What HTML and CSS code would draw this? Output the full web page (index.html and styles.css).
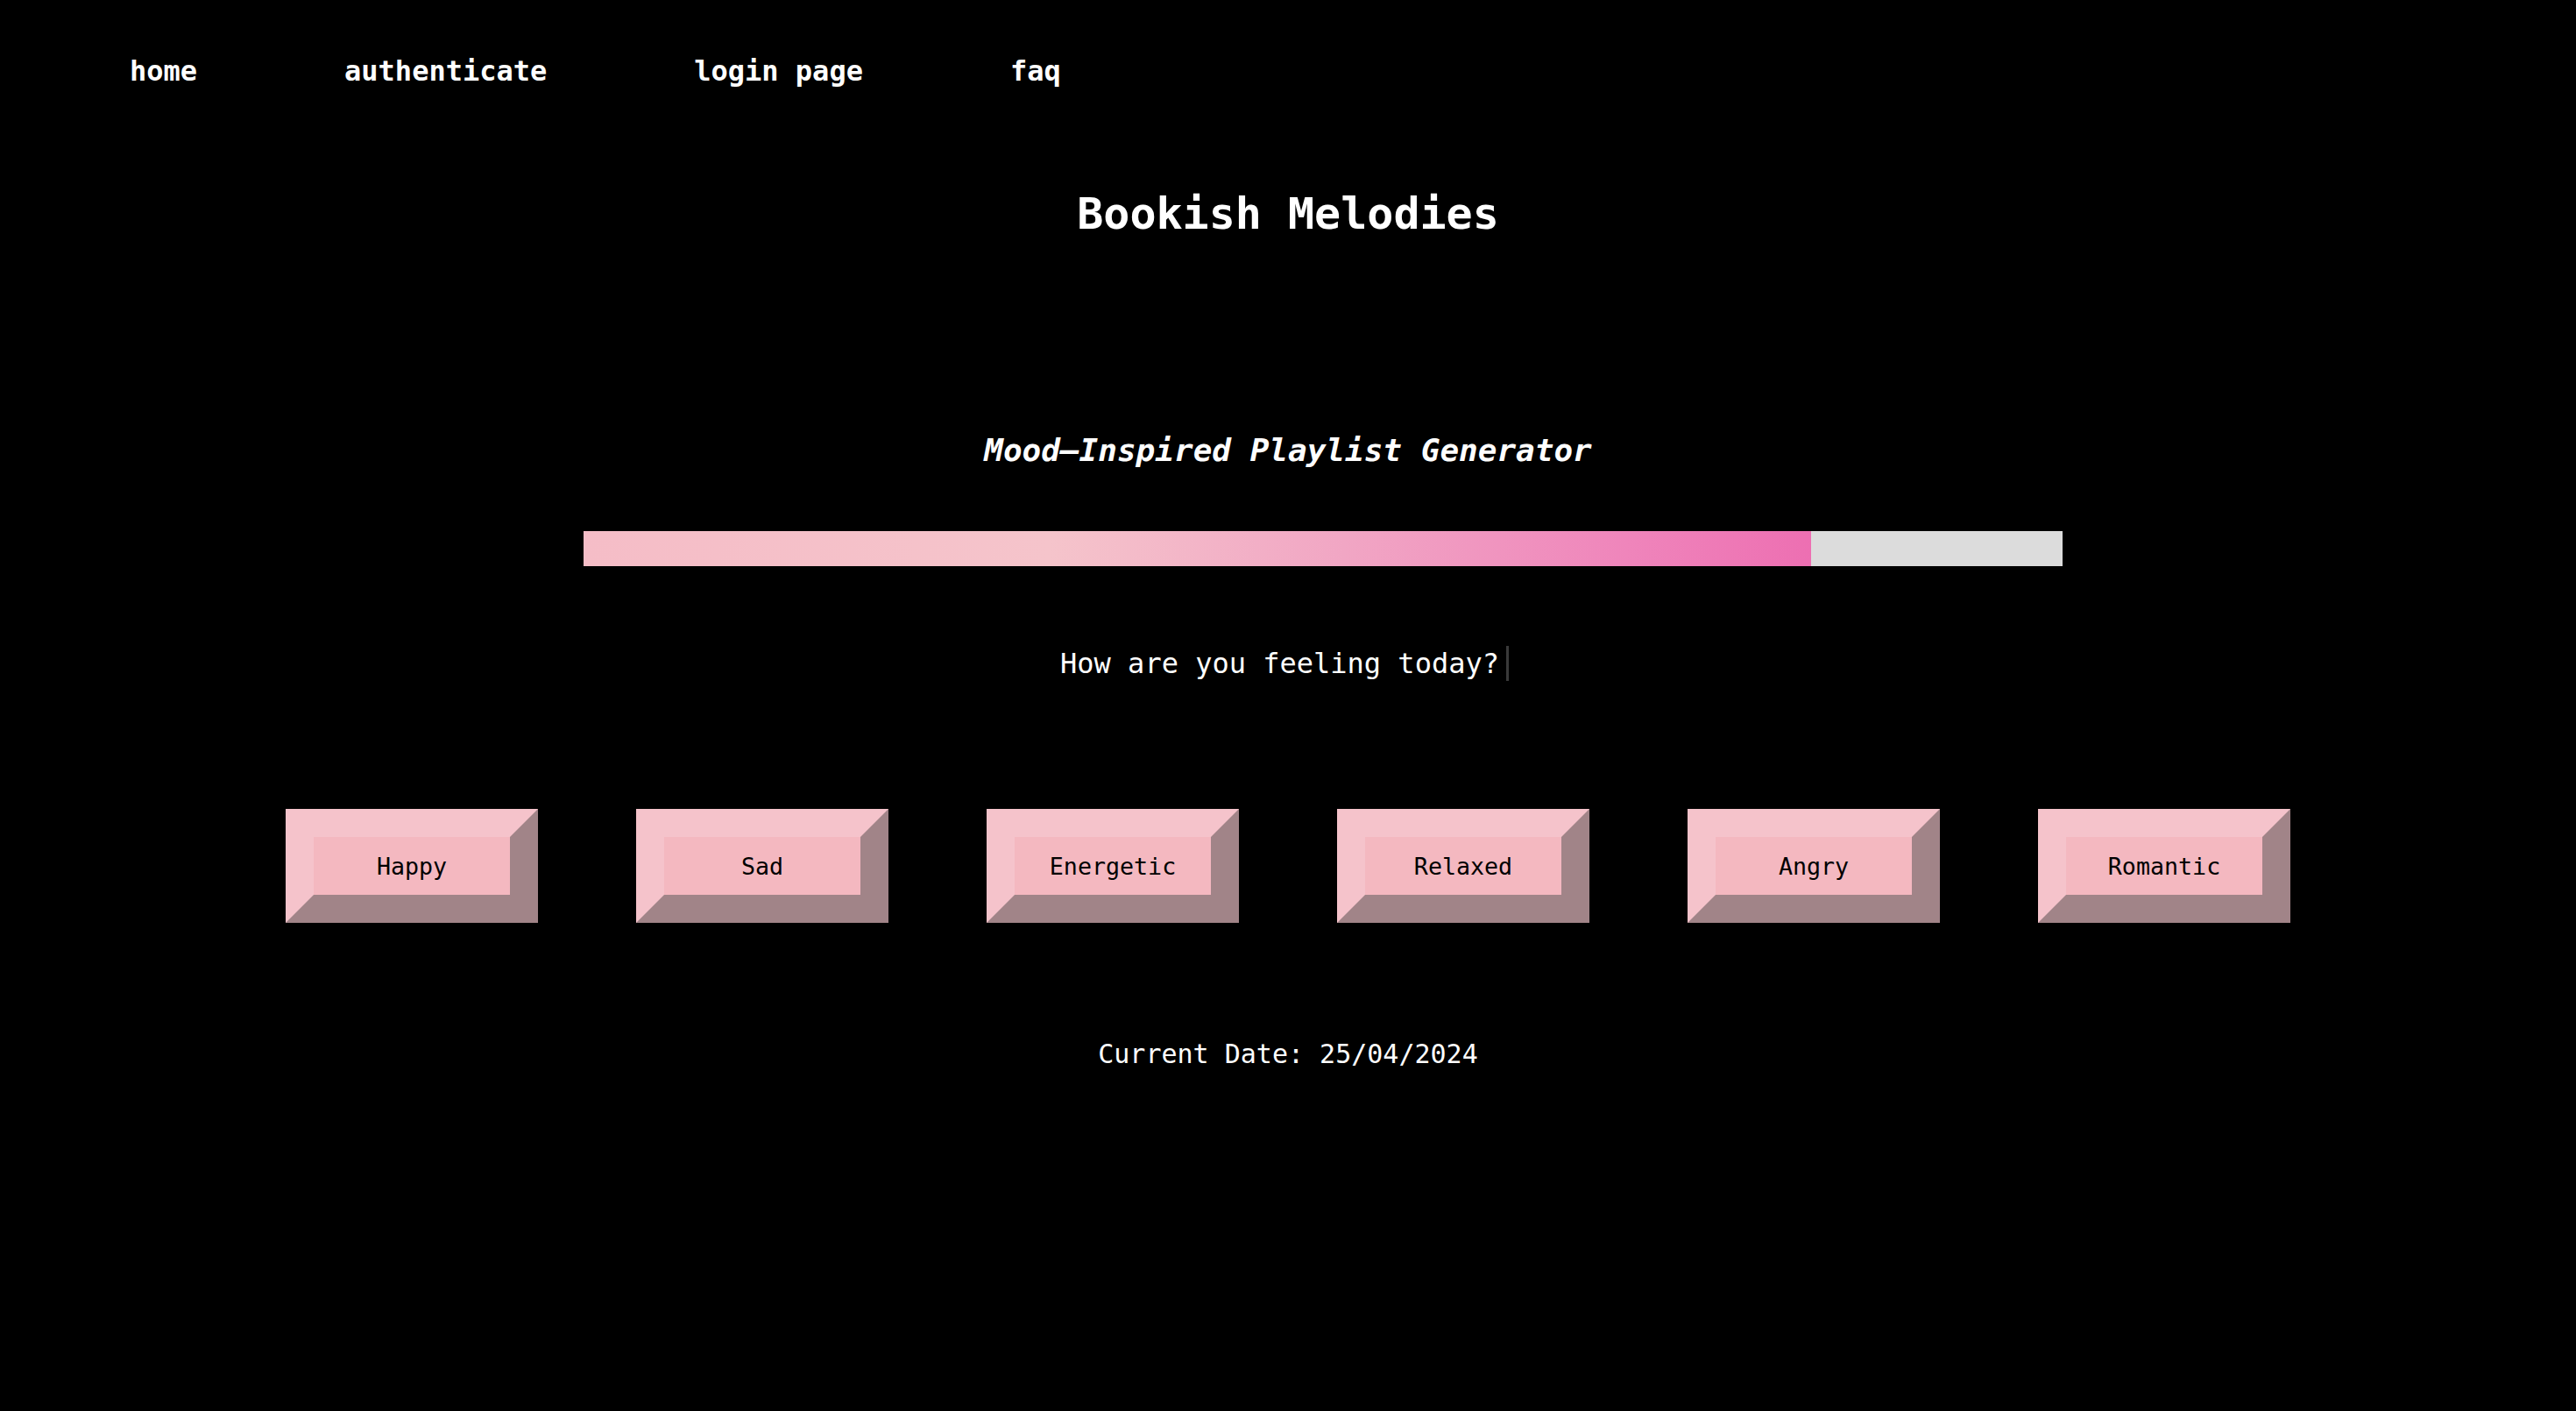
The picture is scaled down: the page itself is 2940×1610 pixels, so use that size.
FILE: index.html
```html
<!DOCTYPE html>
<html lang="en">
<head>
<meta charset="utf-8">
<title>Bookish Melodies</title>
<link rel="stylesheet" href="styles.css">
</head>
<body>
<nav class="nav">
  <a class="nav-link" href="#">home</a>
  <a class="nav-link" href="#">authenticate</a>
  <a class="nav-link" href="#">login page</a>
  <a class="nav-link" href="#">faq</a>
</nav>
<h1 class="title">Bookish Melodies</h1>
<h2 class="subtitle">Mood–Inspired Playlist Generator</h2>
<div class="progress"><div class="progress-fill" style="width: 83%"></div></div>
<div class="question-row"><p class="question">How are you feeling today?</p></div>
<div class="moods">
  <button class="mood">Happy</button>
  <button class="mood">Sad</button>
  <button class="mood">Energetic</button>
  <button class="mood">Relaxed</button>
  <button class="mood">Angry</button>
  <button class="mood">Romantic</button>
</div>
<p class="date">Current Date: 25/04/2024</p>
</body>
</html>
```
FILE: styles.css
```css
html, body {
  margin: 0;
  padding: 0;
  background: #000;
  color: #fff;
  font-family: "DejaVu Sans Mono", "Liberation Mono", monospace;
}

.nav {
  display: flex;
  gap: 168px;
  padding: 62px 0 0 148px;
  line-height: 38px;
}

.nav-link {
  color: #fff;
  text-decoration: none;
  font-weight: bold;
  font-size: 32px;
}

.title {
  margin: 114px 0 0;
  text-align: center;
  font-size: 50px;
  line-height: 60px;
  font-weight: bold;
}

.subtitle {
  margin: 218px 0 0;
  text-align: center;
  font-size: 36px;
  line-height: 44px;
  font-weight: bold;
  font-style: italic;
}

.progress {
  margin: 70px 0 0 666px;
  width: 1688px;
  height: 40px;
  background: #dcdcdc;
  display: flex;
}

.progress-fill {
  height: 100%;
  background: linear-gradient(90deg, #f5bdc7 0%, #f5c4cb 38%, #f1a6c4 62%, #ef85bb 85%, #ed6fb2 100%);
}

.question-row {
  margin-top: 91px;
  display: flex;
  justify-content: center;
}

.question {
  margin: 0 8px 0 0;
  font-size: 32px;
  line-height: 40px;
  padding-right: 8px;
  border-right: 3px solid #3a3a3a;
}

.moods {
  margin-top: 146px;
  display: flex;
  justify-content: center;
  gap: 112px;
}

.mood {
  box-sizing: border-box;
  width: 288px;
  height: 130px;
  border-width: 32px;
  border-style: solid;
  border-color: #f5c3cb #a18488 #a18488 #f5c3cb;
  background: #f4b8c0;
  color: #000;
  font-family: "DejaVu Sans Mono", "Liberation Mono", monospace;
  font-size: 26.67px;
  padding: 0;
  display: flex;
  align-items: center;
  justify-content: center;
}

.date {
  margin: 132px 0 0;
  text-align: center;
  font-size: 30px;
  line-height: 36px;
}
```
